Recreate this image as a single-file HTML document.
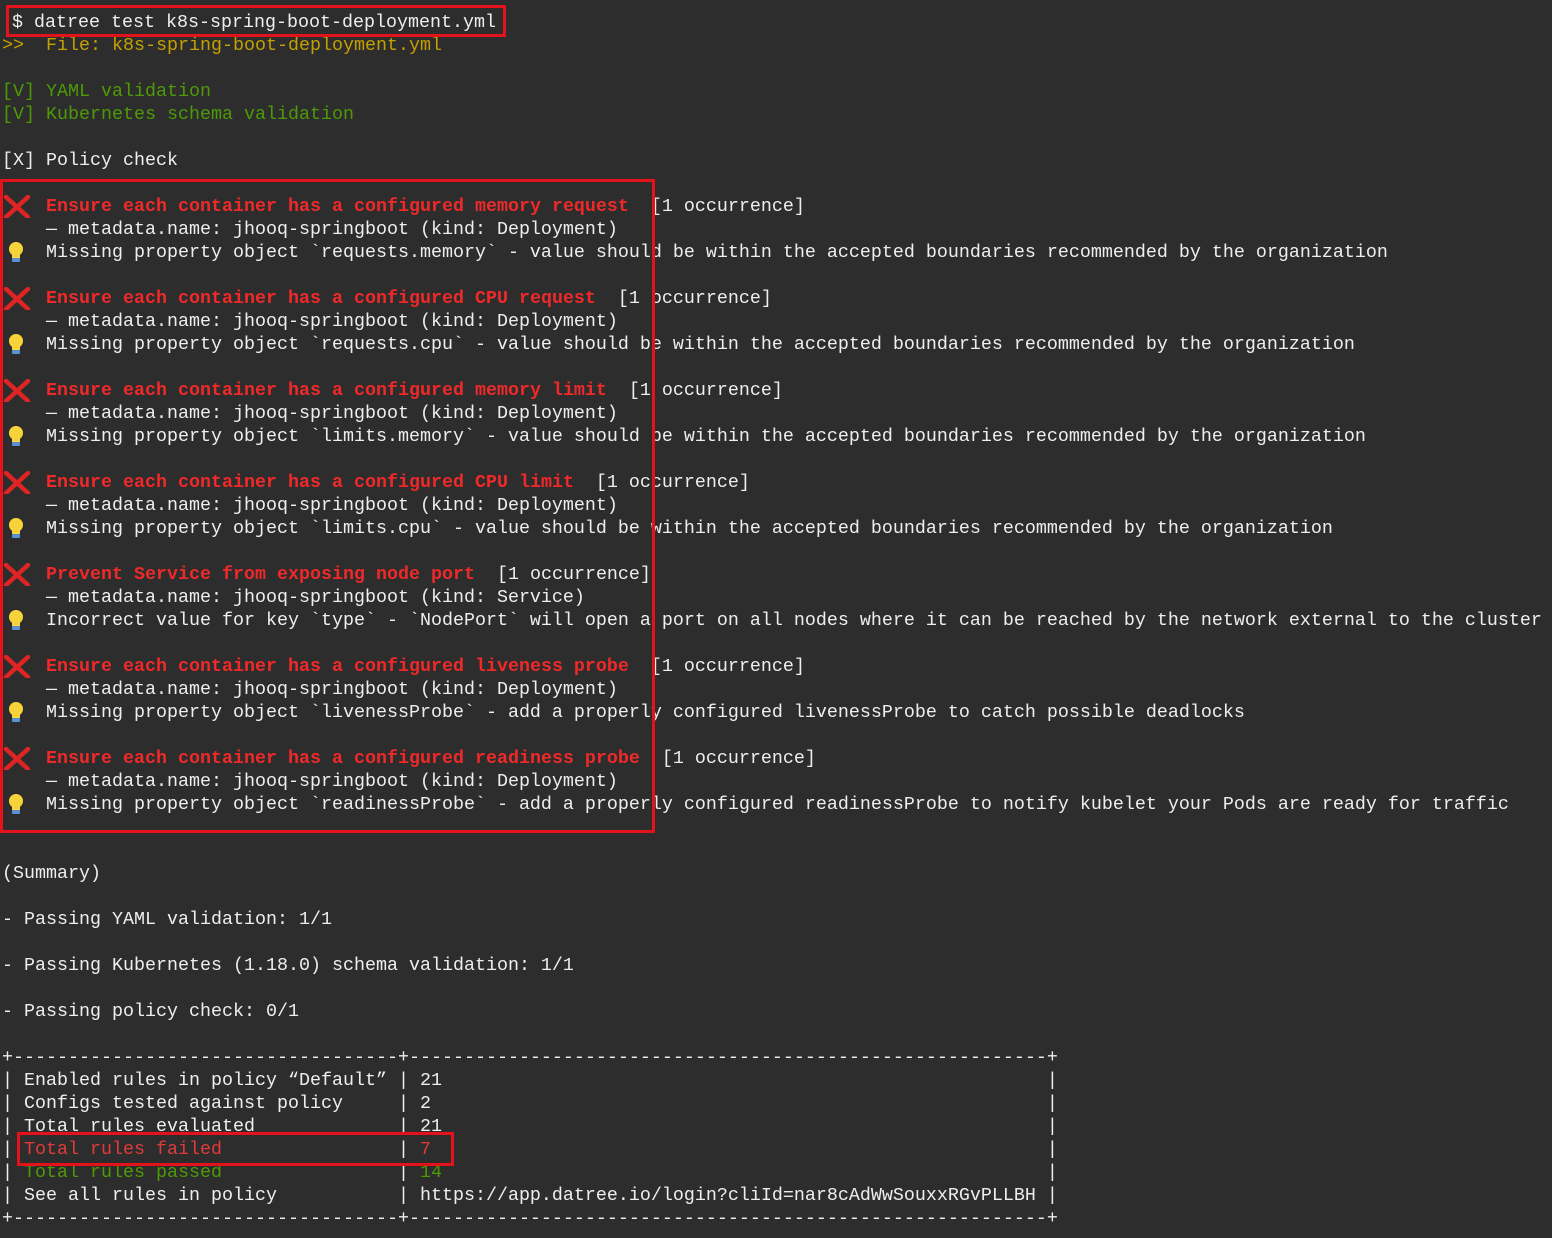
<!DOCTYPE html>
<html><head><meta charset="utf-8"><style>
html,body{margin:0;padding:0;background:#2d2d2d;}
body{width:1552px;height:1238px;overflow:hidden;position:relative;font-family:"Liberation Mono","DejaVu Sans Mono",monospace;font-size:18.33px;color:#eeeeec;}
.t{position:absolute;left:2px;top:11px;}
.l{height:23px;line-height:23px;white-space:pre;position:relative;}
.y{color:#c4a000}.g{color:#4e9a06}.r{color:#ef2929;font-weight:bold}.rr{color:#e23a3a}
.ic{position:absolute;left:0;top:0;}
.box{position:absolute;border:3px solid #e3121b;box-sizing:border-box;}
</style></head><body>
<div class="t">
<div class="l" style="padding-left:10px">$ datree test k8s-spring-boot-deployment.yml</div>
<div class="l y">&gt;&gt;  File: k8s-spring-boot-deployment.yml</div>
<div class="l"> </div>
<div class="l g">[V] YAML validation</div>
<div class="l g">[V] Kubernetes schema validation</div>
<div class="l"> </div>
<div class="l">[X] Policy check</div>
<div class="l"> </div>

<div class="l"><svg class="ic" width="30" height="23"><path d="M4 2L26 22M26 2L4 22" stroke="#e02424" stroke-width="4.5" stroke-linecap="round"/></svg>    <span class="r">Ensure each container has a configured memory request</span>  [1 occurrence]</div>
<div class="l">    — metadata.name: jhooq-springboot (kind: Deployment)</div>
<div class="l"><svg class="ic" width="30" height="23"><circle cx="14" cy="8" r="7" fill="#f7d33a"/><rect x="10" y="13" width="8" height="4" fill="#f7d33a"/><rect x="10" y="17" width="8" height="4" rx="1" fill="#5b8fd6"/></svg>    Missing property object `requests.memory` - value should be within the accepted boundaries recommended by the organization</div>
<div class="l"> </div>

<div class="l"><svg class="ic" width="30" height="23"><path d="M4 2L26 22M26 2L4 22" stroke="#e02424" stroke-width="4.5" stroke-linecap="round"/></svg>    <span class="r">Ensure each container has a configured CPU request</span>  [1 occurrence]</div>
<div class="l">    — metadata.name: jhooq-springboot (kind: Deployment)</div>
<div class="l"><svg class="ic" width="30" height="23"><circle cx="14" cy="8" r="7" fill="#f7d33a"/><rect x="10" y="13" width="8" height="4" fill="#f7d33a"/><rect x="10" y="17" width="8" height="4" rx="1" fill="#5b8fd6"/></svg>    Missing property object `requests.cpu` - value should be within the accepted boundaries recommended by the organization</div>
<div class="l"> </div>

<div class="l"><svg class="ic" width="30" height="23"><path d="M4 2L26 22M26 2L4 22" stroke="#e02424" stroke-width="4.5" stroke-linecap="round"/></svg>    <span class="r">Ensure each container has a configured memory limit</span>  [1 occurrence]</div>
<div class="l">    — metadata.name: jhooq-springboot (kind: Deployment)</div>
<div class="l"><svg class="ic" width="30" height="23"><circle cx="14" cy="8" r="7" fill="#f7d33a"/><rect x="10" y="13" width="8" height="4" fill="#f7d33a"/><rect x="10" y="17" width="8" height="4" rx="1" fill="#5b8fd6"/></svg>    Missing property object `limits.memory` - value should be within the accepted boundaries recommended by the organization</div>
<div class="l"> </div>

<div class="l"><svg class="ic" width="30" height="23"><path d="M4 2L26 22M26 2L4 22" stroke="#e02424" stroke-width="4.5" stroke-linecap="round"/></svg>    <span class="r">Ensure each container has a configured CPU limit</span>  [1 occurrence]</div>
<div class="l">    — metadata.name: jhooq-springboot (kind: Deployment)</div>
<div class="l"><svg class="ic" width="30" height="23"><circle cx="14" cy="8" r="7" fill="#f7d33a"/><rect x="10" y="13" width="8" height="4" fill="#f7d33a"/><rect x="10" y="17" width="8" height="4" rx="1" fill="#5b8fd6"/></svg>    Missing property object `limits.cpu` - value should be within the accepted boundaries recommended by the organization</div>
<div class="l"> </div>

<div class="l"><svg class="ic" width="30" height="23"><path d="M4 2L26 22M26 2L4 22" stroke="#e02424" stroke-width="4.5" stroke-linecap="round"/></svg>    <span class="r">Prevent Service from exposing node port</span>  [1 occurrence]</div>
<div class="l">    — metadata.name: jhooq-springboot (kind: Service)</div>
<div class="l"><svg class="ic" width="30" height="23"><circle cx="14" cy="8" r="7" fill="#f7d33a"/><rect x="10" y="13" width="8" height="4" fill="#f7d33a"/><rect x="10" y="17" width="8" height="4" rx="1" fill="#5b8fd6"/></svg>    Incorrect value for key `type` - `NodePort` will open a port on all nodes where it can be reached by the network external to the cluster</div>
<div class="l"> </div>

<div class="l"><svg class="ic" width="30" height="23"><path d="M4 2L26 22M26 2L4 22" stroke="#e02424" stroke-width="4.5" stroke-linecap="round"/></svg>    <span class="r">Ensure each container has a configured liveness probe</span>  [1 occurrence]</div>
<div class="l">    — metadata.name: jhooq-springboot (kind: Deployment)</div>
<div class="l"><svg class="ic" width="30" height="23"><circle cx="14" cy="8" r="7" fill="#f7d33a"/><rect x="10" y="13" width="8" height="4" fill="#f7d33a"/><rect x="10" y="17" width="8" height="4" rx="1" fill="#5b8fd6"/></svg>    Missing property object `livenessProbe` - add a properly configured livenessProbe to catch possible deadlocks</div>
<div class="l"> </div>

<div class="l"><svg class="ic" width="30" height="23"><path d="M4 2L26 22M26 2L4 22" stroke="#e02424" stroke-width="4.5" stroke-linecap="round"/></svg>    <span class="r">Ensure each container has a configured readiness probe</span>  [1 occurrence]</div>
<div class="l">    — metadata.name: jhooq-springboot (kind: Deployment)</div>
<div class="l"><svg class="ic" width="30" height="23"><circle cx="14" cy="8" r="7" fill="#f7d33a"/><rect x="10" y="13" width="8" height="4" fill="#f7d33a"/><rect x="10" y="17" width="8" height="4" rx="1" fill="#5b8fd6"/></svg>    Missing property object `readinessProbe` - add a properly configured readinessProbe to notify kubelet your Pods are ready for traffic</div>
<div class="l"> </div>
<div class="l"> </div>

<div class="l">(Summary)</div>
<div class="l"> </div>
<div class="l">- Passing YAML validation: 1/1</div>
<div class="l"> </div>
<div class="l">- Passing Kubernetes (1.18.0) schema validation: 1/1</div>
<div class="l"> </div>
<div class="l">- Passing policy check: 0/1</div>
<div class="l"> </div>
<div class="l">+-----------------------------------+----------------------------------------------------------+</div>
<div class="l">| Enabled rules in policy “Default” | 21                                                       |</div>
<div class="l">| Configs tested against policy     | 2                                                        |</div>
<div class="l">| Total rules evaluated             | 21                                                       |</div>
<div class="l">| <span class="rr">Total rules failed</span>                | <span class="rr">7</span>                                                        |</div>
<div class="l">| <span class="g">Total rules passed</span>                | <span class="g">14</span>                                                       |</div>
<div class="l">| See all rules in policy           | https://app.datree.io/login?cliId=nar8cAdWwSouxxRGvPLLBH |</div>
<div class="l">+-----------------------------------+----------------------------------------------------------+</div>
</div>
<div class="box" style="left:6px;top:5px;width:500px;height:32px;"></div>
<div class="box" style="left:0px;top:179px;width:655px;height:654px;"></div>
<div class="box" style="left:17px;top:1132px;width:437px;height:34px;"></div>
</body></html>
